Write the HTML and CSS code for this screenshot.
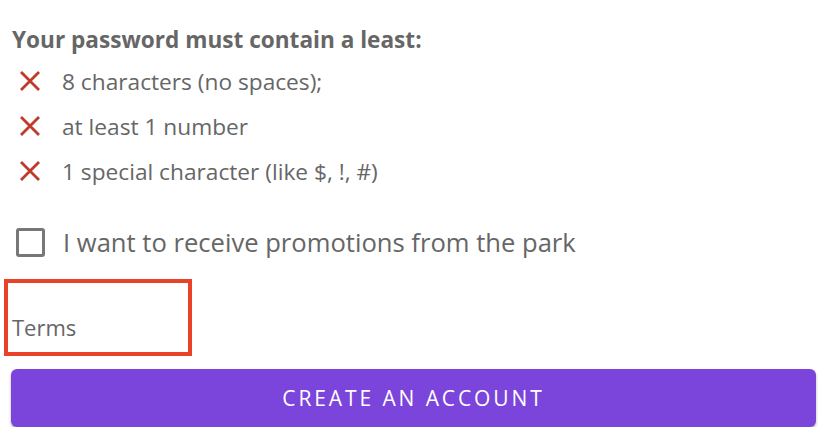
FILE: index.html
```html
<!DOCTYPE html>
<html>
<head>
<meta charset="utf-8">
<link rel="stylesheet" href="styles.css">
</head>
<body>
<div class="form">
  <h3 class="rules-title">Your password must contain a least:</h3>
  <ul class="rules">
    <li class="rule"><svg class="cross" viewBox="0 0 22 22" width="22" height="22"><path d="M2 2 L20 20 M20 2 L2 20"/></svg><span>8 characters (no spaces);</span></li>
    <li class="rule"><svg class="cross" viewBox="0 0 22 22" width="22" height="22"><path d="M2 2 L20 20 M20 2 L2 20"/></svg><span>at least 1 number</span></li>
    <li class="rule"><svg class="cross" viewBox="0 0 22 22" width="22" height="22"><path d="M2 2 L20 20 M20 2 L2 20"/></svg><span>1 special character (like $, !, #)</span></li>
  </ul>
  <label class="promo"><span class="box"></span><span>I want to receive promotions from the park</span></label>
  <div class="terms"><span>Terms</span></div>
  <button class="submit">CREATE AN ACCOUNT</button>
</div>
</body>
</html>
```
FILE: styles.css
```css
html, body {
  margin: 0;
  padding: 0;
  background: #fff;
}
.form {
  width: 806px;
  padding: 0 0 0 11px;
  font-family: "Open Sans", sans-serif;
  color: #666;
  display: flex;
  flex-direction: column;
}
.rules-title {
  margin: 26px 0 0 1px;
  font-size: 22.6px;
  font-weight: 700;
  line-height: 28px;
  color: #666;
}
.rules {
  list-style: none;
  margin: 13px 0 0 0;
  padding: 0;
  display: flex;
  flex-direction: column;
  gap: 17px;
}
.rule {
  display: flex;
  align-items: center;
  height: 28px;
  font-size: 22.7px;
}
.cross {
  margin-left: 8px;
  margin-right: 21px;
  fill: none;
  stroke: #c0392b;
  stroke-width: 2.8;
}
.promo {
  display: flex;
  align-items: center;
  margin-top: 41px;
  height: 32px;
  font-size: 25.6px;
  gap: 18px;
}
.box {
  width: 23px;
  height: 23px;
  border: 3px solid #777;
  border-radius: 3px;
  margin-left: 5px;
  box-sizing: content-box;
}
.terms {
  margin: 21px 0 0 -7px;
  width: 176px;
  height: 69px;
  border: 4px solid #ea4129;
  display: flex;
  align-items: flex-end;
  padding: 0 0 0 4px;
  box-sizing: content-box;
  font-size: 22px;
  line-height: 28px;
}
.terms span {
  margin-bottom: 11px;
}
.submit {
  margin-top: 13px;
  width: 805px;
  height: 58px;
  border: none;
  border-radius: 6px;
  background: #7b44db;
  color: #fff;
  font-family: "Open Sans", sans-serif;
  font-size: 21px;
  font-weight: 400;
  letter-spacing: 2.9px;
  box-shadow: 0 2px 3px rgba(0,0,0,0.3);
  padding: 0;
}
```
